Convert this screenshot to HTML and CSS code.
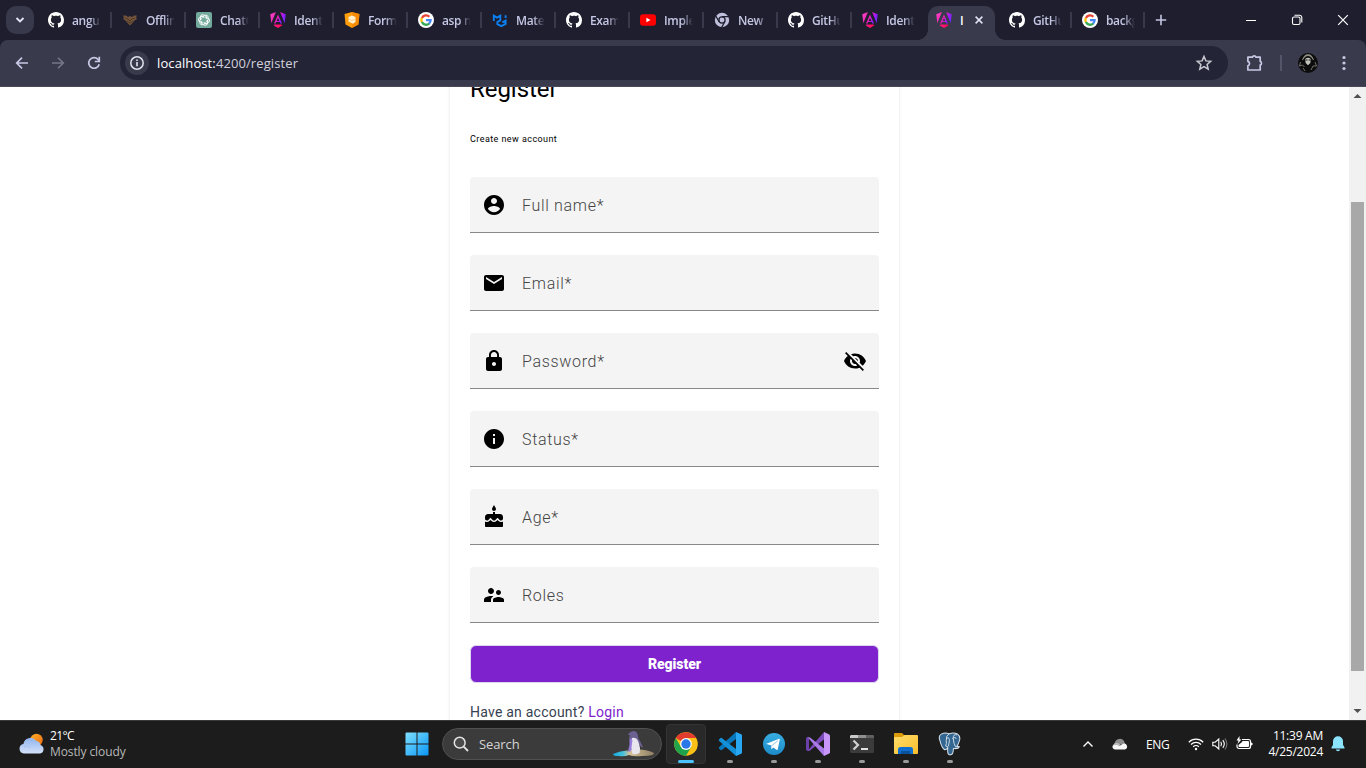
FILE: index.html
```html
<!DOCTYPE html>
<html lang="en">
<head>
<meta charset="utf-8">
<title>Identity</title>
<link rel="stylesheet" href="styles.css">
</head>
<body>
<svg class="defs" width="0" height="0">
  <defs>
    <linearGradient id="ngA" x1="0" y1="0.3" x2="1" y2="0.7"><stop offset="0" stop-color="#ff41c8"/><stop offset=".45" stop-color="#e81fa8"/><stop offset=".75" stop-color="#9a1bff"/><stop offset="1" stop-color="#6a2bff"/></linearGradient>
    <linearGradient id="ngB" x1="0" y1="0" x2="1" y2="0"><stop offset="0" stop-color="#ff1a86"/><stop offset="1" stop-color="#ff0a52"/></linearGradient>
    <linearGradient id="winG" x1="0" y1="0" x2="1" y2="1"><stop offset="0" stop-color="#7fe0ff"/><stop offset="1" stop-color="#0a96f5"/></linearGradient>
    <linearGradient id="sunG" x1="0" y1="0" x2="1" y2="1"><stop offset="0" stop-color="#fcb12a"/><stop offset="1" stop-color="#ee6a10"/></linearGradient>
    <linearGradient id="cloudG" x1="0" y1="0" x2="0" y2="1"><stop offset="0" stop-color="#8fb4ee"/><stop offset="1" stop-color="#d5e2fa"/></linearGradient>
    <linearGradient id="foldG" x1="0" y1="0" x2="1" y2="1"><stop offset="0" stop-color="#ffdd6b"/><stop offset="1" stop-color="#f8bd2c"/></linearGradient>
    <linearGradient id="tgG" x1="0" y1="0" x2="0" y2="1"><stop offset="0" stop-color="#38aee2"/><stop offset="1" stop-color="#1d8bc8"/></linearGradient>
    <linearGradient id="sandG" x1="0" y1="0" x2="1" y2="0"><stop offset="0" stop-color="#12a8dd"/><stop offset=".25" stop-color="#49c2dd"/><stop offset=".4" stop-color="#d5c297"/><stop offset="1" stop-color="#8f7f63"/></linearGradient>
    <symbol id="github" viewBox="0 0 16 16"><path fill="#fff" d="M8 0C3.58 0 0 3.58 0 8c0 3.54 2.29 6.53 5.47 7.59.4.07.55-.17.55-.38 0-.19-.01-.82-.01-1.49-2.01.37-2.53-.49-2.69-.94-.09-.23-.48-.94-.82-1.13-.28-.15-.68-.52-.01-.53.63-.01 1.08.58 1.23.82.72 1.21 1.87.87 2.33.66.07-.52.28-.87.51-1.07-1.78-.2-3.64-.89-3.64-3.95 0-.87.31-1.59.82-2.15-.08-.2-.36-1.02.08-2.12 0 0 .67-.21 2.2.82.64-.18 1.32-.27 2-.27s1.36.09 2 .27c1.53-1.04 2.2-.82 2.2-.82.44 1.1.16 1.92.08 2.12.51.56.82 1.27.82 2.15 0 3.07-1.87 3.75-3.65 3.95.29.25.54.73.54 1.48 0 1.07-.01 1.93-.01 2.2 0 .21.15.46.55.38A8.01 8.01 0 0 0 16 8c0-4.42-3.58-8-8-8z"/></symbol>
    <symbol id="angular" viewBox="0 0 16 16"><path fill="url(#ngA)" d="M5.9 0 0.3 2.2 1.3 11.2zM10.1 0l5.6 2.2-1 9zM8 2.600 4 11.400h1.600l.6-1.300h3.600l.6 1.300H12zM6.700 9 8 6l1.300 3z"/><path fill="url(#ngB)" d="M4.200 12.400h7.600l.4 1.200L8 16l-4.200-2.400z"/></symbol>
    <symbol id="google" viewBox="0 0 16 16"><circle cx="8" cy="8" r="8" fill="#fff"/><g fill="none" stroke-width="2.300"><path stroke="#ea4335" d="M3.900 6A4.700 4.700 0 0 1 11.400 4.700"/><path stroke="#fbbc05" d="M3.900 10.200A4.700 4.700 0 0 1 3.900 5.900"/><path stroke="#34a853" d="M3.900 10.100A4.700 4.700 0 0 0 11.200 11.600"/><path stroke="#4285f4" d="M8 8.100h4.600A4.600 4.600 0 0 1 11 11.700"/></g></symbol>
    <symbol id="chromegray" viewBox="0 0 16 16"><circle cx="8" cy="8" r="7.200" fill="#bfc1dc"/><circle cx="8" cy="8" r="3.100" fill="none" stroke="#1e1e2e" stroke-width="1.300"/><path fill="none" stroke="#1e1e2e" stroke-width="1.200" d="M8 4.700h7M5.100 9.800 1.700 3.900M10.800 9.700 7.500 15.600"/></symbol>
  </defs>
</svg>

<header class="tabstrip">
  <button class="tabsearch"><svg width="10" height="8" viewBox="0 0 10 8"><path d="M1.500 2 5 5.500 8.500 2" fill="none" stroke="#e2e3f4" stroke-width="1.900"/></svg></button>
  <div class="tab"><svg class="fav"><use href="#github"/></svg><span>angu</span></div>
  <div class="tab"><svg class="fav" viewBox="0 0 16 16"><path fill="#735339" d="M1 3.500h3l2 1.500 2-1 2 1 2-1.500h3l-1 2 1 1.500-2.500 1.400L11 10.500l-3 3-3-3-1.500-2L1 7l1-1.500z"/><path d="M3 6l3 1 2 2 2-2 3-1M5 9l3 2 3-2" stroke="#33281f" fill="none" stroke-width=".6"/></svg><span>Offlin</span></div>
  <div class="tab"><svg class="fav" viewBox="0 0 16 16"><rect width="16" height="16" rx="2" fill="#74aa9c"/><g fill="none" stroke="#fff" stroke-width=".9"><g id="petal"><path d="M6 5.200 8.700 3.600a2.200 2.200 0 0 1 3.500 1.800v2.800L9.900 9.500"/></g><use href="#petal" transform="rotate(60 8 8)"/><use href="#petal" transform="rotate(120 8 8)"/><use href="#petal" transform="rotate(180 8 8)"/><use href="#petal" transform="rotate(240 8 8)"/><use href="#petal" transform="rotate(300 8 8)"/></g></svg><span>ChatG</span></div>
  <div class="tab"><svg class="fav"><use href="#angular"/></svg><span>Ident</span></div>
  <div class="tab"><svg class="fav" viewBox="0 0 16 16"><path fill="#ff9d0a" d="M8 0l7.500 2-1 10.500L8 16l-6.500-3.500L.5 2z"/><path fill="#f07c00" d="M8 0l7.500 2-1 10.500L8 16z" opacity=".55"/><path fill="#fff0d0" d="M4.500 5 8 3.500 11.500 5v5L9 11.800 4.500 9.500z"/><path d="M4.500 7l3.500 1.500L11.500 7" stroke="#ffc974" fill="none" stroke-width=".8"/></svg><span>Form</span></div>
  <div class="tab"><svg class="fav"><use href="#google"/></svg><span>asp n</span></div>
  <div class="tab"><svg class="fav" viewBox="0 0 16 16"><path d="M1.800 9V3.600l3.200 2 3.300-2v4.800L5.400 10v2.200l4 2 4.200-2.300V8.600l-3.200 1.800M13.600 6V3.300" fill="none" stroke="#0b80f2" stroke-width="1.900"/></svg><span>Mate</span></div>
  <div class="tab"><svg class="fav"><use href="#github"/></svg><span>Exam</span></div>
  <div class="tab"><svg class="fav" viewBox="0 0 16 16"><rect y="2.300" width="16" height="11.400" rx="3" fill="#f00"/><path fill="#fff" d="M6.400 5.700v4.600L10.500 8z"/></svg><span>Imple</span></div>
  <div class="tab"><svg class="fav"><use href="#chromegray"/></svg><span class="short">New</span></div>
  <div class="tab"><svg class="fav"><use href="#github"/></svg><span>GitHu</span></div>
  <div class="tab last"><svg class="fav"><use href="#angular"/></svg><span>Ident</span></div>
  <div class="tab active"><svg class="fav"><use href="#angular"/></svg><span>I</span><svg class="close" width="8" height="8" viewBox="0 0 8 8"><path d="M.6.600l6.800 6.800M7.400.600.6 7.400" stroke="#e2e3f4" stroke-width="1.500"/></svg></div>
  <div class="tab narrow"><svg class="fav"><use href="#github"/></svg><span>GitHu</span></div>
  <div class="tab narrow"><svg class="fav"><use href="#google"/></svg><span>backg</span></div>
  <svg class="plus" width="12" height="12" viewBox="0 0 12 12"><path d="M6 .8v10.400M.8 6h10.400" stroke="#c4c6e2" stroke-width="1.600"/></svg>
  <div class="wincontrols">
    <svg width="12" height="12" viewBox="0 0 12 12"><path d="M1 6.500h10" stroke="#fff"/></svg>
    <svg width="12" height="12" viewBox="0 0 12 12" fill="none" stroke="#fff" stroke-width="1.100"><rect x="1.500" y="3" width="7.500" height="7.500" rx="1.500"/><path d="M3.500 1.200h5A2.300 2.300 0 0 1 10.800 3.500v5"/></svg>
    <svg width="12" height="12" viewBox="0 0 12 12"><path d="M1.200 1.200l9.600 9.600M10.800 1.200l-9.600 9.600" stroke="#fff" stroke-width="1.200"/></svg>
  </div>
</header>

<nav class="toolbar-wrap">
<div class="toolbar">
  <svg class="nav" viewBox="0 0 16 16"><path d="M14 8H3M8 2.700 2.700 8 8 13.300" fill="none" stroke="#c7c8e4" stroke-width="1.700"/></svg>
  <svg class="nav" viewBox="0 0 16 16"><path d="M2 8h11M8 2.700 13.300 8 8 13.300" fill="none" stroke="#77778a" stroke-width="1.600"/></svg>
  <svg class="nav" viewBox="0 0 16 16"><path d="M13.200 9.200A5.300 5.300 0 1 1 12 4.400l1 1.200" fill="none" stroke="#c7c8e4" stroke-width="1.700"/><path d="M13.300 1.800v4.700H8.800" fill="none" stroke="#c7c8e4" stroke-width="1.700"/></svg>
  <div class="omnibox">
    <div class="siteinfo"><svg width="16" height="16" viewBox="0 0 16 16"><circle cx="8" cy="8" r="6.200" fill="none" stroke="#e2e3ee" stroke-width="1.500"/><path d="M8 7v4.200M8 4.500v1.600" stroke="#e2e3ee" stroke-width="1.600"/></svg></div>
    <span class="url"><b>localhost:</b>4200/register</span>
    <svg class="star" width="18" height="18" viewBox="0 0 18 18"><path d="M9 2.500l1.900 4.400 4.800.4-3.600 3.200 1.100 4.700L9 12.700l-4.200 2.500 1.100-4.700L2.300 7.300l4.800-.4z" fill="none" stroke="#c9c9d2" stroke-width="1.500"/></svg>
  </div>
  <svg class="ext" width="18" height="18" viewBox="0 0 18 18"><path d="M1.900 3.200h4.500a1.900 1.900 0 0 1 3.600 0h4.200v4.200a1.900 1.900 0 0 1 0 3.600v5H1.900v-4.200a2.300 2.300 0 0 0 0-4.400z" fill="none" stroke="#c7c8e4" stroke-width="1.700" stroke-linejoin="round"/></svg>
  <i class="divider"></i>
  <svg class="avatar" width="20" height="20" viewBox="0 0 20 20"><circle cx="10" cy="10" r="10" fill="#0c0c0c"/><path d="M4 7Q6 1 10 1.200 14 1 16 7l-1 0Q13 3 10 3T5 7z" fill="#8f8f88"/><path d="M7.200 6q2.800-2.500 5.600 0l-.5 4L10 12.300 7.700 10z" fill="#c5c5bf"/><path d="M7.600 7h2M10.600 7h2" stroke="#111" stroke-width="1.100"/><path d="M2.500 9 1.500 13l3-1 2 2M17 9l1.500 4-3.500 0-2 4M5 15l2 3" stroke="#7d7d77" fill="none" stroke-width=".9"/></svg>
  <svg class="kebab" width="4" height="16" viewBox="0 0 4 16" fill="#c7c8e4"><circle cx="2" cy="2.500" r="1.600"/><circle cx="2" cy="8" r="1.600"/><circle cx="2" cy="13.500" r="1.600"/></svg>
</div>
</nav>

<main class="page">
  <div class="viewport">
    <section class="card">
      <h1>Register</h1>
      <p class="sub">Create new account</p>
      <form class="fields">
        <div class="field"><svg viewBox="0 0 24 24"><path d="M12 2C6.480 2 2 6.480 2 12s4.480 10 10 10 10-4.480 10-10S17.520 2 12 2zm0 3c1.660 0 3 1.340 3 3s-1.340 3-3 3-3-1.340-3-3 1.340-3 3-3zm0 14.200c-2.500 0-4.710-1.280-6-3.220.030-1.990 4-3.080 6-3.080 1.990 0 5.970 1.090 6 3.080-1.290 1.940-3.500 3.220-6 3.220z"/></svg><label>Full name*</label></div>
        <div class="field"><svg viewBox="0 0 24 24"><path d="M20 4H4c-1.100 0-1.990.9-1.990 2L2 18c0 1.100.9 2 2 2h16c1.100 0 2-.9 2-2V6c0-1.100-.9-2-2-2zm0 4l-8 5-8-5V6l8 5 8-5v2z"/></svg><label>Email*</label></div>
        <div class="field"><svg viewBox="0 0 24 24"><path d="M18 8h-1V6c0-2.760-2.240-5-5-5S7 3.240 7 6v2H6c-1.100 0-2 .9-2 2v10c0 1.100.9 2 2 2h12c1.100 0 2-.9 2-2V10c0-1.100-.9-2-2-2zm-6 9c-1.100 0-2-.9-2-2s.9-2 2-2 2 .9 2 2-.9 2-2 2zm3.100-9H8.900V6c0-1.710 1.390-3.100 3.100-3.100 1.710 0 3.100 1.390 3.100 3.100v2z"/></svg><label>Password*</label><svg viewBox="0 0 24 24"><path d="M12 7c2.760 0 5 2.240 5 5 0 .65-.13 1.260-.36 1.830l2.920 2.920c1.510-1.260 2.700-2.890 3.430-4.750-1.730-4.390-6-7.500-11-7.500-1.400 0-2.740.25-3.980.7l2.160 2.160C10.740 7.130 11.350 7 12 7zM2 4.270l2.280 2.280.46.460C3.080 8.300 1.780 10.020 1 12c1.730 4.390 6 7.500 11 7.500 1.550 0 3.030-.3 4.380-.84l.42.420L19.730 22 21 20.730 3.270 3 2 4.270zM7.530 9.800l1.550 1.550c-.05.210-.08.430-.08.650 0 1.660 1.340 3 3 3 .22 0 .44-.03.650-.08l1.550 1.550c-.67.330-1.410.53-2.200.53-2.760 0-5-2.240-5-5 0-.79.2-1.530.53-2.200zm4.310-.78l3.150 3.150.020-.16c0-1.660-1.340-3-3-3l-.17.010z"/></svg></div>
        <div class="field"><svg viewBox="0 0 24 24"><path d="M12 2C6.480 2 2 6.480 2 12s4.480 10 10 10 10-4.480 10-10S17.520 2 12 2zm1 15h-2v-6h2v6zm0-8h-2V7h2v2z"/></svg><label>Status*</label></div>
        <div class="field"><svg viewBox="0 0 24 24"><path d="M12 6c1.110 0 2-.9 2-2 0-.38-.1-.73-.29-1.030L12 0l-1.710 2.970c-.19.3-.29.650-.29 1.030 0 1.100.9 2 2 2zm4.600 9.990l-1.070-1.070-1.080 1.070c-1.300 1.300-3.580 1.310-4.890 0l-1.070-1.070-1.090 1.070C6.750 16.640 5.880 17 4.960 17c-.73 0-1.400-.23-1.960-.61V21c0 .55.45 1 1 1h16c.55 0 1-.45 1-1v-4.610c-.56.380-1.230.61-1.960.61-.92 0-1.790-.36-2.440-1.010zM18 9h-5V7h-2v2H6c-1.660 0-3 1.340-3 3v1.540c0 1.080.88 1.960 1.960 1.960.52 0 1.020-.2 1.380-.57l2.140-2.130 2.130 2.130c.74.740 2.030.74 2.770 0l2.140-2.130 2.130 2.130c.37.370.86.570 1.380.57 1.080 0 1.960-.88 1.960-1.960V12C21 10.340 19.660 9 18 9z"/></svg><label>Age*</label></div>
        <div class="field"><svg viewBox="0 0 24 24"><path d="M16.500 12c1.380 0 2.490-1.120 2.490-2.500S17.880 7 16.500 7C15.120 7 14 8.120 14 9.500s1.120 2.500 2.500 2.500zM9 11c1.660 0 2.990-1.340 2.990-3S10.660 5 9 5C7.340 5 6 6.340 6 8s1.340 3 3 3zm7.500 3c-1.830 0-5.500.92-5.500 2.750V19h11v-2.250c0-1.830-3.670-2.750-5.500-2.750zM9 13c-2.330 0-7 1.170-7 3.500V19h7v-2.250c0-.85.330-2.340 2.370-3.470C10.500 13.100 9.660 13 9 13z"/></svg><label>Roles</label></div>
      </form>
      <button class="submit">Register</button>
      <p class="have">Have an account? <a>Login</a></p>
    </section>
  </div>
  <div class="scrollbar">
    <svg width="17" height="17" viewBox="0 0 17 17"><path fill="#505050" d="M4.500 11h8l-4-4z"/></svg>
    <i class="thumb"></i>
    <svg width="17" height="17" viewBox="0 0 17 17"><path fill="#505050" d="M4.500 6h8l-4 4z"/></svg>
  </div>
</main>

<footer class="taskbar">
  <div class="weather">
    <svg width="26" height="22" viewBox="0 0 26 22"><circle cx="17.500" cy="7" r="6.200" fill="url(#sunG)"/><path fill="url(#cloudG)" d="M5 20.500a4.800 4.800 0 0 1-.6-9.500A7 7 0 0 1 17 7.800 5.500 5.500 0 0 1 21.500 12a4.400 4.400 0 0 1-.5 8.500z"/><path d="M5 14a5 5 0 0 1 6 .5" stroke="#a9c2f0" fill="none"/></svg>
    <div><p class="temp">21°C</p><p class="cond">Mostly cloudy</p></div>
  </div>
  <div class="apps">
    <svg class="start" width="24" height="24" viewBox="0 0 24 24" fill="url(#winG)"><path d="M1.500.500H11.500V11.500H.5V1.500a1 1 0 0 1 1-1zM12.500.500h10a1 1 0 0 1 1 1v10h-11zM.5 12.500h11v11h-10a1 1 0 0 1-1-1zM12.500 12.500h11v10a1 1 0 0 1-1 1h-10z"/></svg>
    <div class="search">
      <svg width="16" height="16" viewBox="0 0 16 16"><circle cx="6.700" cy="6.700" r="5.400" fill="#4b4b4b" stroke="#e4e4e4" stroke-width="1.500"/><path d="M10.700 10.700 15 15" stroke="#e4e4e4" stroke-width="1.800"/></svg>
      <span>Search</span>
      <svg class="penguin" width="44" height="28" viewBox="0 0 44 28"><path fill="url(#sandG)" d="M1 24q6-3 18-4 14-2 23 3 1 3-12 3-9 1-13-1-4 2-11 1-5 0-5-2z"/><path fill="#6c6090" d="M16 4.500q2-3.500 6-3.500 3.500.5 4 5 0 3 2 5l3 6-1 .5-4-4-8 5-3 4q3-8 2-12 0-4 1-5z"/><path fill="#e9e5ef" d="M20 8q4-1 6 3 3 7 1.500 12-3 2-7 1-3-8-.5-16z"/><path fill="#9a7de0" d="M18 9l2.500 1-1.500 11-2.500 1q2-7 1.500-13z"/></svg>
    </div>
    <div class="app current"><svg width="24" height="24" viewBox="0 0 24 24"><circle cx="12" cy="12" r="11.800" fill="#fbc116"/><path fill="#e33b2e" d="M12 12 1.800 6.100A11.800 11.800 0 0 1 22.200 6.100H12z"/><path fill="#1fa34b" d="M12 12 6.900 15 1.800 6.100A11.800 11.800 0 0 0 12 23.800L17.100 15z"/><circle cx="12" cy="12" r="5.900" fill="#fff"/><circle cx="12" cy="12" r="4.700" fill="#2a77e8"/></svg><i></i></div>
    <div class="app"><svg width="24" height="24" viewBox="0 0 24 24"><path fill="#0878bd" d="M18 0 1 15.300a1 1 0 0 0 0 1.300l1.500 1.300q.6.500 1.300 0L18 7z"/><path fill="#1390d8" d="M18 24 1 8.700a1 1 0 0 1 0-1.300l1.500-1.300q.6-.5 1.300 0L18 17z"/><path fill="#28a8f2" d="M18 0l5.200 2.300a1.300 1.300 0 0 1 .8 1.200v17a1.300 1.300 0 0 1-.8 1.200L18 24z"/></svg><i></i></div>
    <div class="app"><svg width="24" height="24" viewBox="0 0 24 24"><circle cx="12" cy="12" r="11" fill="url(#tgG)"/><path fill="#fff" d="M4.500 11.800 17 6.800q1-.3.8.8l-2.100 9.800q-.3.900-1.200.4l-3.200-2.400-1.600 1.500q-.5.300-.5-.3l.3-3-4.900-1.500q-.9-.2-.1-.3z"/><path d="M9.700 13.800l6-5" stroke="#8fc9ea"/></svg><i></i></div>
    <div class="app"><svg width="24" height="24" viewBox="0 0 24 24"><path fill="#6b41a8" d="M0 6l2-1.200L3 7v10l-1 2.200L0 18z"/><path fill="#7b4bbd" d="M1.400 19 18 0v7.500L4 18.500q-1.300.9-2.600.5z"/><path fill="#a97be8" d="M1.400 5 4 5.500 18 16.500V24z"/><path fill="#c896fa" d="M18 0l5.300 2.500.7 1v17l-.7 1L18 24z"/></svg><i></i></div>
    <div class="app"><svg width="24" height="24" viewBox="0 0 24 24"><rect y="3" width="24" height="18" rx="1" fill="#3b3b3b"/><path fill="#c9c9c9" d="M1 3h7v3H0V4z"/><path fill="#8f8f8f" d="M8 3h8v3H8z"/><path fill="#606060" d="M16 3h7l1 1v2h-8z"/><path d="M3.500 8.500 8 13l-4.500 4.500" fill="none" stroke="#d2d2d2" stroke-width="2.200"/><path d="M11 17h7" stroke="#f4f4f4" stroke-width="1.800"/></svg><i></i></div>
    <div class="app"><svg width="24" height="24" viewBox="0 0 24 24"><path fill="#dc9a08" d="M0 2q0-1 1-1h7l2.500 2.500V8H0z"/><path fill="url(#foldG)" d="M0 6q0-1 1-1h7l2.500-2H23q1 0 1 1v17q0 1-1 1H1q-1 0-1-1z"/><path fill="#0f6fd0" d="M4 22v-4.500q0-2.500 2.500-2.500h10q2.500 0 2.500 2.500V22z"/><path fill="#0b5199" d="M7 19h9v3H7z"/></svg><i></i></div>
    <div class="app"><svg width="26" height="26" viewBox="0 0 26 26"><path fill="#336791" stroke="#d9e2ea" stroke-width="1.100" d="M4 2q4-2 8 0 5-2 9 0 4 3 2 8-1 4-3 6l3-.3q0 2.500-5 2.300-1-.2-1.300 0-.2 6-2.200 6.500-4 1-4-3.500v-4q-2 3-3.500 2-3-2-5-10Q0 4 4 2z"/><path fill="none" stroke="#d9e2ea" stroke-width="1" d="M12 2Q8.500 4 9 9q.5 4-.7 6 2 2 3 0Q13 8 12 7q-1-1.500-3 0M20.500 3q-4-1-4 4 .5 6 2.500 9M15.500 7q3-2 4.500 0"/></svg><i></i></div>
  </div>
  <div class="tray">
    <svg class="up" width="12" height="8" viewBox="0 0 12 8"><path d="M1.500 6.500 6 2l4.500 4.500" fill="none" stroke="#fff" stroke-width="1.400"/></svg>
    <svg class="onedrive" width="16" height="12" viewBox="0 0 16 12"><path fill="#8d8d8d" d="M3 7a5 5 0 0 1 9-4l1 3z"/><path fill="#b9b9b9" d="M1.500 9.500a3.200 3.200 0 0 1 3-4.800q2 0 4 2z"/><path fill="#f6f6f6" d="M3 11.500a2.600 2.600 0 0 1-2-4.200Q4 6.500 8 7.500l3-1.800a3 3 0 0 1 2 5.800z"/></svg>
    <span class="lang">ENG</span>
    <svg class="wifi" width="16" height="16" viewBox="0 0 16 16" fill="none" stroke="#fff" stroke-width="1.200"><path d="M.8 6.200a10.200 10.200 0 0 1 14.400 0M3 8.500a7 7 0 0 1 10 0M5.200 10.800a4 4 0 0 1 5.600 0"/><circle cx="8" cy="13" r="1.200" fill="#fff" stroke="none"/></svg>
    <svg class="vol" width="16" height="16" viewBox="0 0 16 16" fill="none" stroke="#fff" stroke-width="1.100"><path d="M.8 6.200v3.600h2.400L6.800 13V3L3.200 6.200zM8.800 5.800q1.500 2.200 0 4.400M10.800 4.200q3 3.800 0 7.600"/><path stroke="#777" d="M12.900 2.500q4 5.500 0 11"/></svg>
    <svg class="bat" width="17" height="16" viewBox="0 0 17 16"><path fill="none" stroke="#fff" stroke-width="1.200" d="M6 3.500h6.500a2 2 0 0 1 2 2v5a2 2 0 0 1-2 2H3a2 2 0 0 1-2-2V8.500"/><path fill="#fff" d="M6.500 5H12q1 0 1 1v4q0 1-1 1H3.500q-1 0-1-1V9L6 6zM15 6.500l1.500.5v2l-1.500.5zM3.500 0 .5 4.500h2L1.500 8 5.500 3.500h-2z"/></svg>
    <div class="clock"><p>11:39 AM</p><p>4/25/2024</p></div>
    <svg class="bell" width="14" height="16" viewBox="0 0 14 16"><path fill="#8be4fd" d="M7 .3a5 5 0 0 1 5 5v3.400l1.600 3.100q.2.700-.5.700H.9q-.7 0-.5-.7L2 8.700V5.300a5 5 0 0 1 5-5zM4.800 13.500h4.400Q8.800 15.300 7 15.300T4.800 13.500z"/></svg>
  </div>
</footer>
</body>
</html>
```
FILE: styles.css
```css
* { box-sizing: border-box; }
body { margin: 0; width: 1366px; height: 768px; overflow: hidden; background: #fff; display: flex; flex-direction: column; font-family: "Open Sans", "Noto Sans", sans-serif; }
p, h1 { margin: 0; }
button { border: 0; padding: 0; }
svg { flex: none; display: block; }
.defs { width: 0; height: 0; position: absolute; }

.tabstrip { height: 40px; flex: none; display: flex; align-items: center; background: #1e1e2e; padding-left: 6px; }
.tabsearch { width: 28px; height: 28px; margin-right: 4px; border-radius: 10px; background: #39394c; display: flex; align-items: center; justify-content: center; }
.tab { width: 74px; height: 34px; flex: none; display: flex; align-items: center; padding-left: 10px; gap: 8px; align-self: flex-end; padding-bottom: 6px; position: relative; }
.tab::after { content: ""; position: absolute; right: 0; top: 6px; width: 2px; height: 16px; background: #39394b; }
.tab.last::after { display: none; }
.tab.narrow { width: 73px; }
.fav { width: 16px; height: 16px; }
.tab span { width: 32px; padding-top: 1px; white-space: nowrap; font-size: 12px; font-weight: 600; line-height: 18px; letter-spacing: -.35px; color: #c5c7e4; -webkit-mask-image: linear-gradient(90deg, #000 55%, transparent 90%); mask-image: linear-gradient(90deg, #000 55%, transparent 90%); }
.tab span.short { -webkit-mask-image: linear-gradient(90deg, #000 60%, #0006 80%); mask-image: linear-gradient(90deg, #000 60%, #0006 80%); }
.tab.active { width: 67px; margin: 0 4px 0 2px; padding-left: 8px; background: #3a3a4d; border-radius: 10px 10px 0 0; }
.tab.active::before, .tab.active::after { content: ""; position: absolute; bottom: 0; top: auto; width: 10px; height: 10px; }
.tab.active::before { left: -10px; background: radial-gradient(circle at 0 0, transparent 9.5px, #3a3a4d 10px); }
.tab.active::after { right: -10px; background: radial-gradient(circle at 100% 0, transparent 9.5px, #3a3a4d 10px); }
.tab.active span { width: 4px; color: #fff; -webkit-mask-image: none; mask-image: none; }
.close { margin-left: 3px; }
.plus { margin-left: 10px; }
.wincontrols { margin-left: auto; display: flex; gap: 34px; padding-right: 17px; }

.toolbar-wrap { height: 47px; flex: none; background: #1e1e2e; }
.toolbar { height: 47px; display: flex; align-items: center; background: linear-gradient(#3a3a4d 46px, #48485a 46px); border-radius: 8px 8px 0 0; padding: 0 20px 1px 14px; }
.nav { width: 16px; height: 16px; margin-right: 20px; }
.omnibox { width: 1108px; height: 34px; margin-left: -2px; border-radius: 17px; background: #242437; display: flex; align-items: center; padding: 0 15px 0 5px; }
.siteinfo { width: 24px; height: 24px; border-radius: 50%; background: #3a3a4d; display: flex; align-items: center; justify-content: center; }
.url { margin-left: 8px; font-size: 13px; line-height: 20px; color: #d0d0da; letter-spacing: .1px; }
.url b { font-weight: 400; color: #fff; }
.star { margin-left: auto; }
.ext { margin-left: 18px; }
.divider { width: 2px; height: 16px; background: #55556a; margin-left: 16px; }
.avatar { margin-left: 16px; }
.kebab { margin-left: auto; }

.page { height: 633px; flex: none; display: flex; overflow: hidden; background: #fff; }
.viewport { flex: 1; overflow: hidden; }
.card { width: 449px; height: 720px; margin: -32px 0 0 450px; padding: 18px 20px 0; display: flex; flex-direction: column; box-shadow: 0 0 3px rgba(0,0,0,.12); font-family: Roboto, "Liberation Sans", sans-serif; }
.card h1 { font-size: 24px; line-height: 32px; font-weight: 400; letter-spacing: -.05px; color: #000; }
.sub { margin-top: 27px; font-size: 9px; line-height: 14px; letter-spacing: .43px; color: #000; }
.fields { margin-top: 31px; display: flex; flex-direction: column; gap: 22px; }
.field { height: 56px; display: flex; align-items: center; padding: 0 12px; background: #f4f4f4; border-bottom: 1px solid #888; border-radius: 4px 4px 0 0; }
.field svg { width: 24px; height: 24px; fill: #000; }
.field label { flex: 1; margin-left: 16px; padding-top: 2px; font-size: 16px; line-height: 24px; letter-spacing: .68px; font-weight: 300; color: #444; }
.submit { height: 38px; margin-top: 22px; flex: none; border: 1px solid #dcd6ee; border-radius: 6px; background: #7e22ce; color: #fff; font: 900 14px/34px Roboto, sans-serif; letter-spacing: -.05px; }
.have { margin-top: 19px; font-size: 14px; line-height: 20px; letter-spacing: .23px; color: #374151; }
.have a { color: #7e22ce; }
.scrollbar { width: 17px; background: #f1f1f1; display: flex; flex-direction: column; align-items: center; }
.thumb { width: 13px; height: 469px; margin: 98px 0 auto; background: #a8a8a8; }

.taskbar { height: 48px; flex: none; display: flex; align-items: center; background: #1c1c1c; border-top: 1px solid #3a3a3a; padding-bottom: 1px; color: #fff; }
.weather { width: 405px; display: flex; align-items: center; padding-left: 19px; gap: 5px; font-size: 12px; line-height: 16px; }
.temp { letter-spacing: -.6px; }
.cond { color: #b8b8b8; letter-spacing: -.1px; }
.apps { display: flex; align-items: center; }
.search { width: 220px; height: 32px; margin-left: 13px; margin-right: 2px; border-radius: 16px; background: #3b3b3b; border: 1px solid #505050; display: flex; align-items: center; padding: 0 5px 0 10px; }
.search span { margin-left: 10px; font-size: 13px; color: #d5d5d5; letter-spacing: -.1px; }
.penguin { margin-left: auto; }
.app { width: 44px; height: 40px; display: flex; flex-direction: column; align-items: center; justify-content: flex-end; gap: 4px; padding-bottom: 1px; }
.app svg { width: 24px; height: 24px; }
.app i { width: 6px; height: 3px; border-radius: 2px; background: #9a9a9a; }
.app.current { background: #292929; border: 1px solid #343434; border-radius: 4px; width: 40px; margin: 0 2px; padding-bottom: 0; }
.app.current i { width: 16px; background: #4cc2ff; }
.tray { margin-left: auto; display: flex; align-items: center; padding-right: 21px; }
.up { margin-right: 18px; }
.onedrive { margin-right: 18px; }
.lang { width: 26px; font-size: 12px; letter-spacing: -.3px; margin-right: 16px; }
.wifi { margin-right: 8px; }
.vol { margin-right: 8px; }
.bat { margin-right: 9px; }
.clock { width: 61px; text-align: right; font-size: 12px; line-height: 16px; letter-spacing: -.25px; white-space: nowrap; }
.bell { margin-left: 8px; }
```
